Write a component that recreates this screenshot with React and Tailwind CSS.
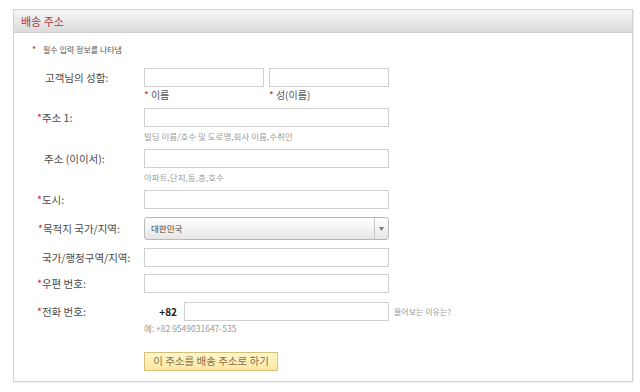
import React from 'react';

const font = { fontFamily: '"Noto Sans CJK KR", "Noto Sans", sans-serif' };

const Star = () => <span className="text-[#c8282d]">*</span>;

const Label = ({ required, children, pad }) => (
  <div className={`w-[130px] shrink-0 text-[10.5px] leading-[14px] text-[#4a4a4a] ${pad}`}>
    {required && <Star />}
    {children}
  </div>
);

const Field = ({ w = 'w-[245px]' }) => (
  <div className={`${w} h-[19px] border border-[#cfcfcf] bg-white`} />
);

const Hint = ({ children, mt }) => (
  <div className={`pl-[130px] ${mt} text-[8.5px] leading-[12px] text-[#9a9a9a]`}>{children}</div>
);

const App = () => {
  return (
    <div className="w-[640px] h-[392px] bg-white pt-[9px] pl-[13px]" style={font}>
      <div className="w-[620px] h-[373px] border border-[#d2d2d2] shadow-[1px_1px_1px_rgba(0,0,0,0.06)]">
        <div className="h-[23px] bg-gradient-to-b from-[#f6f6f6] to-[#dcdcdc] border-b border-[#d0d0d0] pl-[7px] flex items-center">
          <span className="text-[11px] text-[#a33a44] leading-none">배송 주소</span>
        </div>

        <div className="pt-[11px] flex flex-col">
          <div className="pl-[18px] h-[12px] flex items-center text-[8px] text-[#555]">
            <span className="text-[#c8282d] text-[9px] w-[11px]">*</span>
            <span>필수 입력 정보를 나타냄</span>
          </div>

          {/* name */}
          <div className="mt-[12px] flex items-center">
            <Label pad="pl-[31px]">고객님의 성함:</Label>
            <div className="flex gap-[5px]">
              <Field w="w-[120px]" />
              <Field w="w-[120px]" />
            </div>
          </div>
          <div className="mt-[2px] pl-[130px] flex text-[10px] leading-[12px] text-[#555]">
            <div className="w-[125px]"><span className="text-[#c8282d]">*</span> 이름</div>
            <div><span className="text-[#c8282d]">*</span> 성(이름)</div>
          </div>

          {/* address 1 */}
          <div className="mt-[7px] flex items-center">
            <Label required pad="pl-[23px]">주소 1:</Label>
            <Field />
          </div>
          <Hint mt="mt-[3px]">빌딩 이름/호수 및 도로명,회사 이름,수취인</Hint>

          {/* address 2 */}
          <div className="mt-[7px] flex items-center">
            <Label pad="pl-[30px]">주소 (이이서):</Label>
            <Field />
          </div>
          <Hint mt="mt-[3px]">아파트,단지,동,층,호수</Hint>

          {/* city */}
          <div className="mt-[7px] flex items-center">
            <Label required pad="pl-[23px]">도시:</Label>
            <Field />
          </div>

          {/* country */}
          <div className="mt-[8px] flex items-center">
            <Label required pad="pl-[24px]">목적지 국가/지역:</Label>
            <div className="w-[245px] h-[23px] rounded-[3px] border border-[#b9b9b9] bg-gradient-to-b from-white to-[#e6e6e6] flex items-center">
              <span className="flex-1 pl-[6px] text-[8.5px] text-[#444]">대한민국</span>
              <div className="w-[14px] h-full border-l border-[#c4c4c4] flex items-center justify-center">
                <svg width="5" height="4" viewBox="0 0 5 4">
                  <path d="M0 0h5L2.5 4z" fill="#777" />
                </svg>
              </div>
            </div>
          </div>

          {/* region */}
          <div className="mt-[8px] flex items-center">
            <Label pad="pl-[28px]">국가/행정구역/지역:</Label>
            <Field />
          </div>

          {/* postal */}
          <div className="mt-[7px] flex items-center">
            <Label required pad="pl-[23px]">우편 번호:</Label>
            <Field />
          </div>

          {/* phone */}
          <div className="mt-[9px] flex items-center">
            <Label required pad="pl-[23px]">전화 번호:</Label>
            <div className="w-[34px] text-right text-[10px] font-bold text-[#222] pr-[1px]">+82</div>
            <div className="ml-[6px]">
              <Field w="w-[205px]" />
            </div>
            <span className="ml-[5px] text-[8px] text-[#9a9a9a]">물어보는 이유는?</span>
          </div>
          <Hint mt="mt-[1px]">예: +82 9549031647-535</Hint>

          <div className="mt-[12px] pl-[130px]">
            <button className="h-[19px] w-[134px] border border-[#d9c07a] bg-gradient-to-b from-[#fff6cc] to-[#fbe7a3] text-[10.5px] leading-none text-[#8a6f45]">
              이 주소를 배송 주소로 하기
            </button>
          </div>
        </div>
      </div>
    </div>
  );
};

export default App;
